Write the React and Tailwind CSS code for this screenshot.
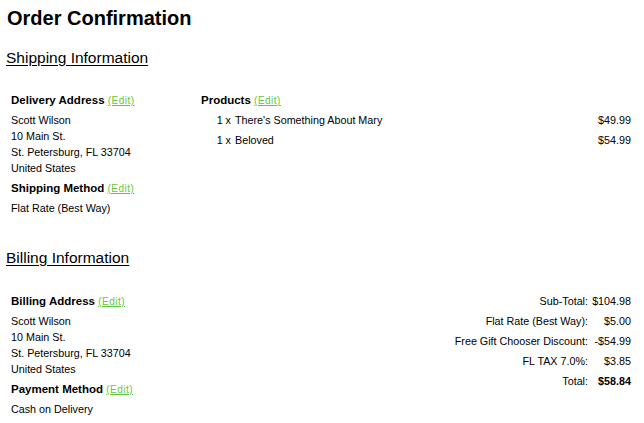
const addressLines = ['Scott Wilson', '10 Main St.', 'St. Petersburg, FL 33704', 'United States'];

const products = [
  { qty: 1, name: "There's Something About Mary", price: '$49.99' },
  { qty: 1, name: 'Beloved', price: '$54.99' },
];

const totals = [
  { label: 'Sub-Total:', value: '$104.98' },
  { label: 'Flat Rate (Best Way):', value: '$5.00' },
  { label: 'Free Gift Chooser Discount:', value: '-$54.99' },
  { label: 'FL TAX 7.0%:', value: '$3.85' },
  { label: 'Total:', value: '$58.84', bold: true },
];

const EditLink = () => (
  <a href="#" className="text-[10px] leading-none font-normal tracking-[0.5px] text-[#5fc83c] underline">
    (Edit)
  </a>
);

const BlockTitle = ({ children, className = '' }) => (
  <div className={`h-[20px] text-[11.5px] leading-[20px] font-bold ${className}`}>
    {children} <EditLink />
  </div>
);

const Address = () => (
  <div className="mt-[2px]">
    {addressLines.map((line) => (
      <div key={line} className="leading-[16px]">
        {line}
      </div>
    ))}
  </div>
);

const SectionTitle = ({ children }) => (
  <h2 className="text-[15.5px] leading-[20px] underline underline-offset-[2px] ml-[-1px]">{children}</h2>
);

export default function App() {
  return (
    <div
      className="w-[644px] h-[423px] bg-white text-black pt-[6px] pl-[7px] pr-[13px] overflow-hidden"
      style={{ fontFamily: '"Liberation Sans", Arial, sans-serif' }}
    >
      <h1 className="text-[20px] leading-[24px] font-bold">Order Confirmation</h1>

      {/* Shipping */}
      <div className="mt-[18px]">
        <SectionTitle>Shipping Information</SectionTitle>
      </div>
      <div className="mt-[22px] flex text-[10.75px] pl-[4px]">
        <div className="w-[190px]">
          <BlockTitle>Delivery Address</BlockTitle>
          <Address />
          <BlockTitle className="mt-[2px]">Shipping Method</BlockTitle>
          <div className="mt-[2px] leading-[16px]">Flat Rate (Best Way)</div>
        </div>
        <div className="flex-1">
          <BlockTitle>Products</BlockTitle>
          {products.map((p) => (
            <div key={p.name} className="flex leading-[20px]">
              <span className="w-[30px] text-right">{p.qty}&nbsp;x</span>
              <span className="ml-[4px] flex-1">{p.name}</span>
              <span className="text-right">{p.price}</span>
            </div>
          ))}
        </div>
      </div>

      {/* Billing */}
      <div className="mt-[32px]">
        <SectionTitle>Billing Information</SectionTitle>
      </div>
      <div className="mt-[23px] flex text-[10.75px] pl-[4px]">
        <div className="w-[190px]">
          <BlockTitle>Billing Address</BlockTitle>
          <Address />
          <BlockTitle className="mt-[2px]">Payment Method</BlockTitle>
          <div className="mt-[2px] leading-[16px]">Cash on Delivery</div>
        </div>
        <div className="flex-1 flex flex-col items-end">
          {totals.map((t) => (
            <div key={t.label} className="flex leading-[20px]">
              <span className="text-right">{t.label}</span>
              <span className={`w-[43px] text-right ${t.bold ? 'font-bold' : ''}`}>{t.value}</span>
            </div>
          ))}
        </div>
      </div>
    </div>
  );
}
